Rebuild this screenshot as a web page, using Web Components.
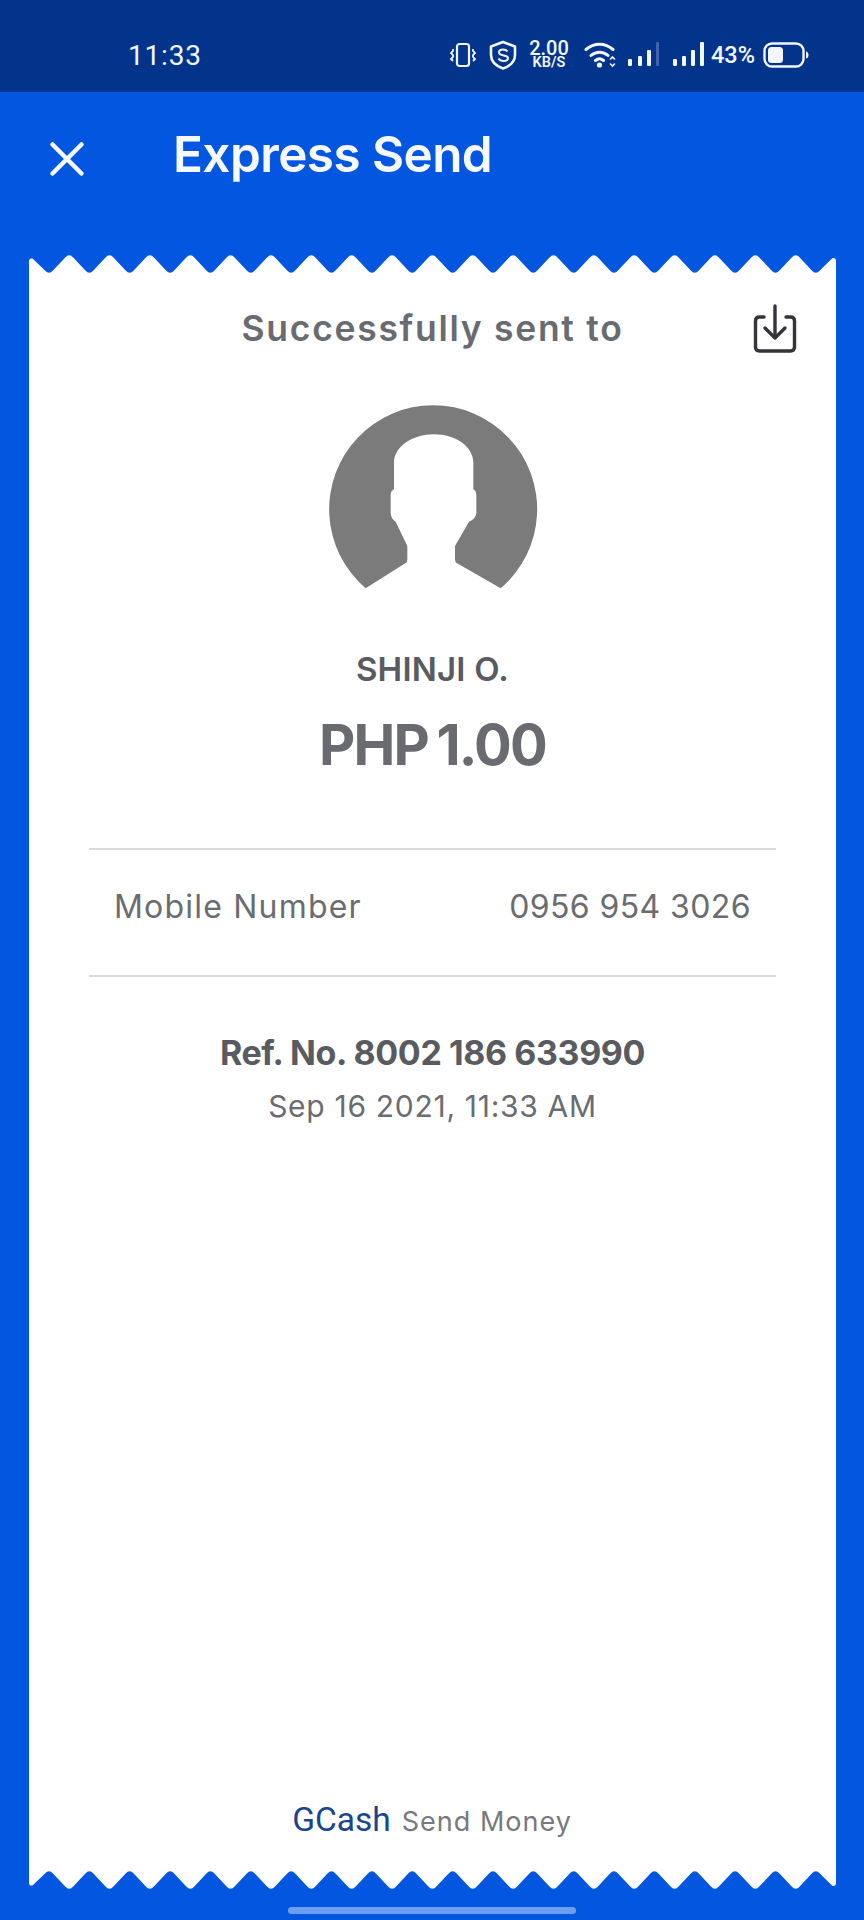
<!DOCTYPE html>
<html>
<head>
<meta charset="utf-8">
<style>
	html, body { margin: 0; padding: 0; background: #0356e0; }
	body { width: 864px; height: 1920px; overflow: hidden; font-family: Inter, "Noto Sans", sans-serif; }
</style>
</head>
<body>
<status-bar></status-bar>
<app-bar title="Express Send"></app-bar>
<receipt-card>
	<transfer-summary name="SHINJI O." amount="PHP 1.00"></transfer-summary>
	<detail-row label="Mobile Number" value="0956 954 3026"></detail-row>
	<ref-block ref="Ref. No. 8002 186 633990" date="Sep 16 2021, 11:33 AM"></ref-block>
	<span slot="footer">GCash</span>
</receipt-card>
<home-bar></home-bar>

<script>
class StatusBar extends HTMLElement {
	constructor() {
		super();
		this.attachShadow({ mode: "open" });
		this.shadowRoot.innerHTML = `
			<style>
				:host { display: flex; align-items: center; height: 92px; background: #03348c; color: #f2f6fd; box-sizing: border-box; padding: 18px 0 0 128px; }
				.time { font: 400 28px Roboto, sans-serif; letter-spacing: 0.8px; }
				.icons { display: flex; align-items: center; margin: 0 55px 0 auto; }
				svg { display: block; }
				.speed { display: flex; flex-direction: column; align-items: center; width: 40px; margin-left: 12px; font: 500 20px/15px Roboto, sans-serif; }
				.speed small { font: 600 14.500px/14px Roboto, sans-serif; }
				.pct { font: 500 23.500px Roboto, sans-serif; margin: 0 8px 0 6px; width: 44px; }
			</style>
			<span class="time">11:33</span>
			<div class="icons">
				<svg width="28" height="28" viewBox="0 0 28 28" fill="none" stroke="currentColor" stroke-width="2.2">
					<rect x="8" y="3" width="12" height="22" rx="2.500"/>
					<path d="M4 8v2l-2 2 2 2 0 2-2 2 2 2M24 8v2l2 2-2 2 0 2 2 2-2 2" stroke-width="1.800"/>
				</svg>
				<svg style="margin-left:12px" width="28" height="30" viewBox="0 0 28 30" fill="none" stroke="currentColor" stroke-width="2.600">
					<path d="M14 2 26 6.500V15c0 7-5 11-12 13.500C7 26 2 22 2 15V6.500Z" stroke-linejoin="round"/>
					<path d="M18.500 11.500c-1-1.500-2.500-2-4.500-2-2.500 0-4 1.200-4 3 0 4 9 2 9 5.500 0 1.800-2 3-4.500 3-2.200 0-4-.8-5-2.500" stroke-width="2"/>
				</svg>
				<div class="speed">2.00<small>KB/S</small></div>
				<svg style="margin-left:15px" width="32" height="26" viewBox="0 0 32 26" fill="none" stroke="currentColor" stroke-width="3" stroke-linecap="round">
					<path d="M2 7.500C10 .5 21 .5 29 7.500M7 13.500C12 9 19 9 24 13.500M11.500 18.500c3-2.500 5-2.500 8 0"/>
					<circle cx="15.500" cy="23" r="2.600" fill="currentColor" stroke="none"/>
					<path d="M26.500 17l2-2 2 2M26.500 22l2 2 2-2" stroke-width="1.600"/>
				</svg>
				<svg style="margin-left:12px" width="32" height="26" viewBox="0 0 32 26" fill="currentColor">
					<rect x="0" y="17" width="4" height="7" rx="1"/>
					<rect x="10" y="14" width="4" height="10" rx="1"/>
					<rect x="19" y="8" width="4" height="16" rx="1"/>
					<rect x="28" y="0" width="3" height="24" rx="1" opacity=".25"/>
				</svg>
				<svg style="margin-left:13px" width="32" height="26" viewBox="0 0 32 26" fill="currentColor">
					<rect x="0" y="17" width="4" height="7" rx="1"/>
					<rect x="9" y="14" width="4" height="10" rx="1"/>
					<rect x="18" y="8" width="4" height="16" rx="1"/>
					<rect x="27" y="0" width="4" height="24" rx="1"/>
				</svg>
				<span class="pct">43%</span>
				<svg width="46" height="26" viewBox="0 0 46 26" fill="none">
					<rect x="1.500" y="1.500" width="39" height="23" rx="7.500" stroke="currentColor" stroke-width="2.400"/>
					<rect x="5" y="5" width="15" height="16" rx="3.500" fill="currentColor"/>
					<path d="M43 9.500c2 .5 2.500 2 2.500 3.500s-.5 3-2.500 3.500Z" fill="currentColor"/>
				</svg>
			</div>
		`;
	}
}

class AppBar extends HTMLElement {
	connectedCallback() {
		this.attachShadow({ mode: "open" });
		this.shadowRoot.innerHTML = `
			<style>
				:host { display: flex; align-items: center; height: 161px; box-sizing: border-box; padding: 0 0 29px 49px; color: #f6f9fe; }
				svg { display: block; margin-top: 2px; }
				h1 { margin: 0 0 8px 88px; font: 600 49.500px Inter, sans-serif; letter-spacing: -0.6px; }
			</style>
			<svg width="36" height="36" viewBox="0 0 36 36" fill="none" stroke="currentColor" stroke-width="4.500" stroke-linecap="round">
				<path d="M3.500 3.500 32.500 32.500M32.500 3.500 3.500 32.500"/>
			</svg>
			<h1>${this.getAttribute("title")}</h1>
		`;
	}
}

// zigzag edge of the receipt, white on blue. flip = bottom edge
function teeth(flip) {
	const w = 807, h = 24, period = 40.36, r = 4;
	const top = 0, low = 22;
	const dy = r * (low - top) / (period / 2);
	let d = `M0 ${h} L0 8 Q0 5 3.5 5.500`;
	for (let x = 20; x < w - 10; x += period) {
		d += ` L${(x - r).toFixed(1)} ${(low - dy).toFixed(1)} Q${x.toFixed(1)} ${low} ${(x + r).toFixed(1)} ${(low - dy).toFixed(1)}`;
		const p = x + period / 2;
		if (p < w - 10) {
			d += ` L${(p - r).toFixed(1)} ${(top + dy).toFixed(1)} Q${p.toFixed(1)} ${top} ${(p + r).toFixed(1)} ${(top + dy).toFixed(1)}`;
		}
	}
	d += ` L803.500 5 Q807 4.500 807 8 L${w} ${h} Z`;
	const t = flip ? `transform: scaleY(-1);` : "";
	return `<svg style="display:block;${t}" width="${w}" height="${h}" viewBox="0 0 ${w} ${h}"><path d="${d}" fill="#fff"/></svg>`;
}

class ReceiptCard extends HTMLElement {
	constructor() {
		super();
		this.attachShadow({ mode: "open" });
		this.shadowRoot.innerHTML = `
			<style>
				:host { display: flex; flex-direction: column; width: 807px; height: 1638px; margin-left: 29px; overflow: hidden; }
				.body { flex: 1; background: #fff; display: flex; flex-direction: column; }
				.content { flex: 1; display: flex; flex-direction: column; }
				.footer { display: flex; justify-content: center; align-items: baseline; gap: 11px; padding-bottom: 28px; padding-right: 1px; }
				::slotted([slot=footer]) { font: 400 33.500px Roboto, sans-serif; color: #1a448f; }
				.sub { font: 400 27px Inter, sans-serif; letter-spacing: 1px; color: #77797d; }
			</style>
			${teeth(false)}
			<div class="body">
				<div class="content"><slot></slot></div>
				<div class="footer"><slot name="footer"></slot><span class="sub">Send Money</span></div>
			</div>
			${teeth(true)}
		`;
	}
}

class TransferSummary extends HTMLElement {
	connectedCallback() {
		this.attachShadow({ mode: "open" });
		this.shadowRoot.innerHTML = `
			<style>
				:host { display: flex; flex-direction: column; align-items: center; position: relative; }
				.head { font: 600 35.500px/40px Inter, sans-serif; letter-spacing: 1.700px; color: #696b70; margin-top: 32px; }
				.save { position: absolute; top: 27px; right: 38px; }
				.avatar { display: block; margin-top: 52px; }
				.name { font: 600 33px/36px Inter, sans-serif; letter-spacing: 0.2px; color: #595b60; margin-top: 60px; }
				.amount { font: 700 56px/64px Inter, sans-serif; letter-spacing: -1.800px; word-spacing: -3px; color: #696b70; margin: 26px 0 71px; }
			</style>
			<div class="head">Successfully sent to</div>
			<svg class="save" width="46" height="50" viewBox="0 0 46 50" fill="none" stroke="#33353a" stroke-width="3.400" stroke-linecap="round" stroke-linejoin="round">
				<path d="M23 2V34M13 24 23 34 33 24"/>
				<path d="M12 13H7.500C5 13 3.500 14.500 3.500 17V43C3.500 45.500 5 47 7.500 47H38.500C41 47 42.500 45.500 42.500 43V17C42.500 14.500 41 13 38.500 13H34"/>
			</svg>
			<svg class="avatar" width="240" height="190" viewBox="7 30 720 570">
				<path fill="#7b7b7b" d="M165 592 A312 312 0 1 1 570 592 L438 516 Q433 513 433 505 V465 L475 392 Q497 382 497 365 V312 Q497 300 488 295 V215 C488 168 436 130 370 130 C304 130 250 168 250 215 V295 Q240 300 240 312 V365 Q240 382 255 392 L290 465 V505 Q290 513 285 516 Z"/>
			</svg>
			<div class="name">${this.getAttribute("name")}</div>
			<div class="amount">${this.getAttribute("amount")}</div>
		`;
	}
}

class DetailRow extends HTMLElement {
	connectedCallback() {
		this.attachShadow({ mode: "open" });
		this.shadowRoot.innerHTML = `
			<style>
				:host { display: flex; justify-content: space-between; align-items: center; height: 125px; margin: 0 60px; padding: 0 25px; border-top: 2px solid #d8dadf; border-bottom: 2px solid #d8dadf; font: 400 32px Inter, sans-serif; color: #6a6c71; }
				span { margin-bottom: 12px; }
				.label { letter-spacing: 1.200px; }
				.value { letter-spacing: 0.400px; }
			</style>
			<span class="label">${this.getAttribute("label")}</span>
			<span class="value">${this.getAttribute("value")}</span>
		`;
	}
}

class RefBlock extends HTMLElement {
	connectedCallback() {
		this.attachShadow({ mode: "open" });
		this.shadowRoot.innerHTML = `
			<style>
				:host { display: flex; flex-direction: column; align-items: center; margin-top: 54px; }
				.ref { font: 700 34px/44px Inter, sans-serif; letter-spacing: -0.4px; color: #595b60; }
				.date { font: 400 30px/40px Inter, sans-serif; letter-spacing: 0.700px; color: #6a6c71; margin-top: 11px; }
			</style>
			<div class="ref">${this.getAttribute("ref")}</div>
			<div class="date">${this.getAttribute("date")}</div>
		`;
	}
}

class HomeBar extends HTMLElement {
	constructor() {
		super();
		this.attachShadow({ mode: "open" });
		this.shadowRoot.innerHTML = `
			<style>
				:host { display: flex; justify-content: center; margin-top: 16px; }
				div { width: 288px; height: 7px; border-radius: 4px; background: #6c9ff0; }
			</style>
			<div></div>
		`;
	}
}

customElements.define("status-bar", StatusBar);
customElements.define("app-bar", AppBar);
customElements.define("receipt-card", ReceiptCard);
customElements.define("transfer-summary", TransferSummary);
customElements.define("detail-row", DetailRow);
customElements.define("ref-block", RefBlock);
customElements.define("home-bar", HomeBar);
</script>
</body>
</html>
